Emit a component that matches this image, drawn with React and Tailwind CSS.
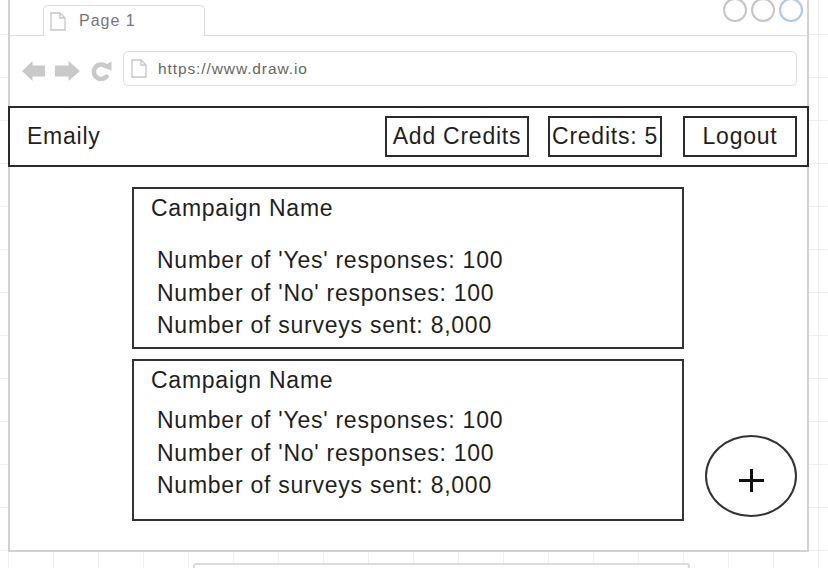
import React from 'react';

const ink = 'text-[#1f1f1f]';

function PageIcon({ className }) {
  return (
    <svg className={className} width="16" height="19" viewBox="0 0 16 19">
      <path d="M1 1 H10 L15 6 V18 H1 Z" fill="#fff" stroke="#c6c6c6" strokeWidth="1.3" />
      <path d="M10 1 V6 H15" fill="none" stroke="#c6c6c6" strokeWidth="1.3" />
    </svg>
  );
}

function ArrowLeft() {
  return (
    <svg width="23" height="20" viewBox="0 0 23 20">
      <path d="M0 10 L10.5 0 L10.5 4.5 L23 4.5 L23 15.5 L10.5 15.5 L10.5 20 Z" fill="#c9c9c9" />
    </svg>
  );
}

function ArrowRight() {
  return (
    <svg width="25" height="20" viewBox="0 0 25 20">
      <path d="M25 10 L13.5 0 L13.5 4.5 L0 4.5 L0 15.5 L13.5 15.5 L13.5 20 Z" fill="#c9c9c9" />
    </svg>
  );
}

function Reload() {
  return (
    <svg width="22" height="20" viewBox="0 0 22 20">
      <path d="M16.5 6 A7.2 7.2 0 1 0 17.5 14" fill="none" stroke="#c9c9c9" strokeWidth="4.5" />
      <polygon points="12,6 21.5,0.5 21.5,9.5" fill="#c9c9c9" />
    </svg>
  );
}

function Card({ gap }) {
  return (
    <div className={`h-[162px] border-2 border-[#333] bg-white pt-[3px] pl-[17px] ${ink}`}>
      <div className="leading-[32px]">Campaign Name</div>
      <div className={`${gap} pl-[6px] leading-[32.5px]`}>
        <div>Number of 'Yes' responses: 100</div>
        <div>Number of 'No' responses: 100</div>
        <div>Number of surveys sent: 8,000</div>
      </div>
    </div>
  );
}

export default function App() {
  return (
    <div className="w-[828px] h-[568px] overflow-hidden bg-white bg-[linear-gradient(to_right,#efefef_1px,transparent_1px),linear-gradient(to_bottom,#efefef_1px,transparent_1px)] [background-size:45px_43px] [background-position:8px_34px] font-['Liberation_Sans',Arial,sans-serif] text-[23px] tracking-[0.75px]">
      {/* browser frame */}
      <div className="ml-[8px] w-[801px] h-[552px] border-x-2 border-b-2 border-[#d2d2d2] bg-white flex flex-col">
        {/* tab strip */}
        <div className="h-[36px] flex justify-between border-b border-[#dedede]">
          <div className="relative mt-[5px] ml-[33px] w-[162px] h-[31px] border border-b-0 border-[#dcdcdc] rounded-t-[5px] bg-white flex items-center pl-[6px]">
            <PageIcon />
            <span className="ml-[13px] text-[16px] tracking-[1px] text-[#777]">Page 1</span>
          </div>
          <div className="flex gap-[4px] mr-[4px] -mt-[2px]">
            <div className="w-[24px] h-[24px] rounded-full border-2 border-[#c6c6c6]" />
            <div className="w-[24px] h-[24px] rounded-full border-2 border-[#c6c6c6]" />
            <div className="w-[24px] h-[24px] rounded-full border-2 border-[#a9c9ef]" />
          </div>
        </div>

        {/* address row */}
        <div className="mt-[15px] flex items-center pl-[12px] pr-[10px]">
          <div className="flex items-center mt-[5px]">
            <ArrowLeft />
            <div className="ml-[10px]"><ArrowRight /></div>
            <div className="ml-[10px]"><Reload /></div>
          </div>
          <div className="ml-[11px] flex-1 h-[35px] border border-[#dedede] rounded-[5px] flex items-center pl-[7px]">
            <PageIcon />
            <span className="ml-[11px] text-[15.5px] tracking-[0.9px] text-[#666]">https://www.draw.io</span>
          </div>
        </div>

        {/* app nav */}
        <div className={`mt-[20px] -mx-[2px] h-[61px] border-2 border-[#2b2b2b] flex items-center pl-[17px] pr-[10px] ${ink}`}>
          <span>Emaily</span>
          <div className="ml-auto flex items-center">
            <div className="w-[144px] h-[41px] border-2 border-[#2b2b2b] flex items-center justify-center">Add Credits</div>
            <div className="ml-[19px] w-[114px] h-[41px] border-2 border-[#2b2b2b] flex items-center justify-center">Credits: 5</div>
            <div className="ml-[21px] w-[114px] h-[41px] border-2 border-[#2b2b2b] flex items-center justify-center">Logout</div>
          </div>
        </div>

        {/* campaigns */}
        <div className="mt-[20px] flex items-end">
          <div className="ml-[122px] w-[552px] flex flex-col gap-[10px]">
            <Card gap="mt-[20px]" />
            <Card gap="mt-[8px]" />
          </div>
          <div className="ml-[21px] mb-[4px] w-[92px] h-[82px] rounded-[50%] border-2 border-[#333] flex items-center justify-center">
            <svg className="mt-[8px]" width="25" height="23" viewBox="0 0 25 23">
              <path d="M0 11.5 H25 M12.5 0 V23" stroke="#111" strokeWidth="3" />
            </svg>
          </div>
        </div>
      </div>

      {/* next shape on canvas */}
      <div className="mt-[11px] ml-[193px] w-[497px] h-[10px] border-t-2 border-x-2 border-[#dcdcdc] rounded-t-[3px] bg-white" />
    </div>
  );
}
